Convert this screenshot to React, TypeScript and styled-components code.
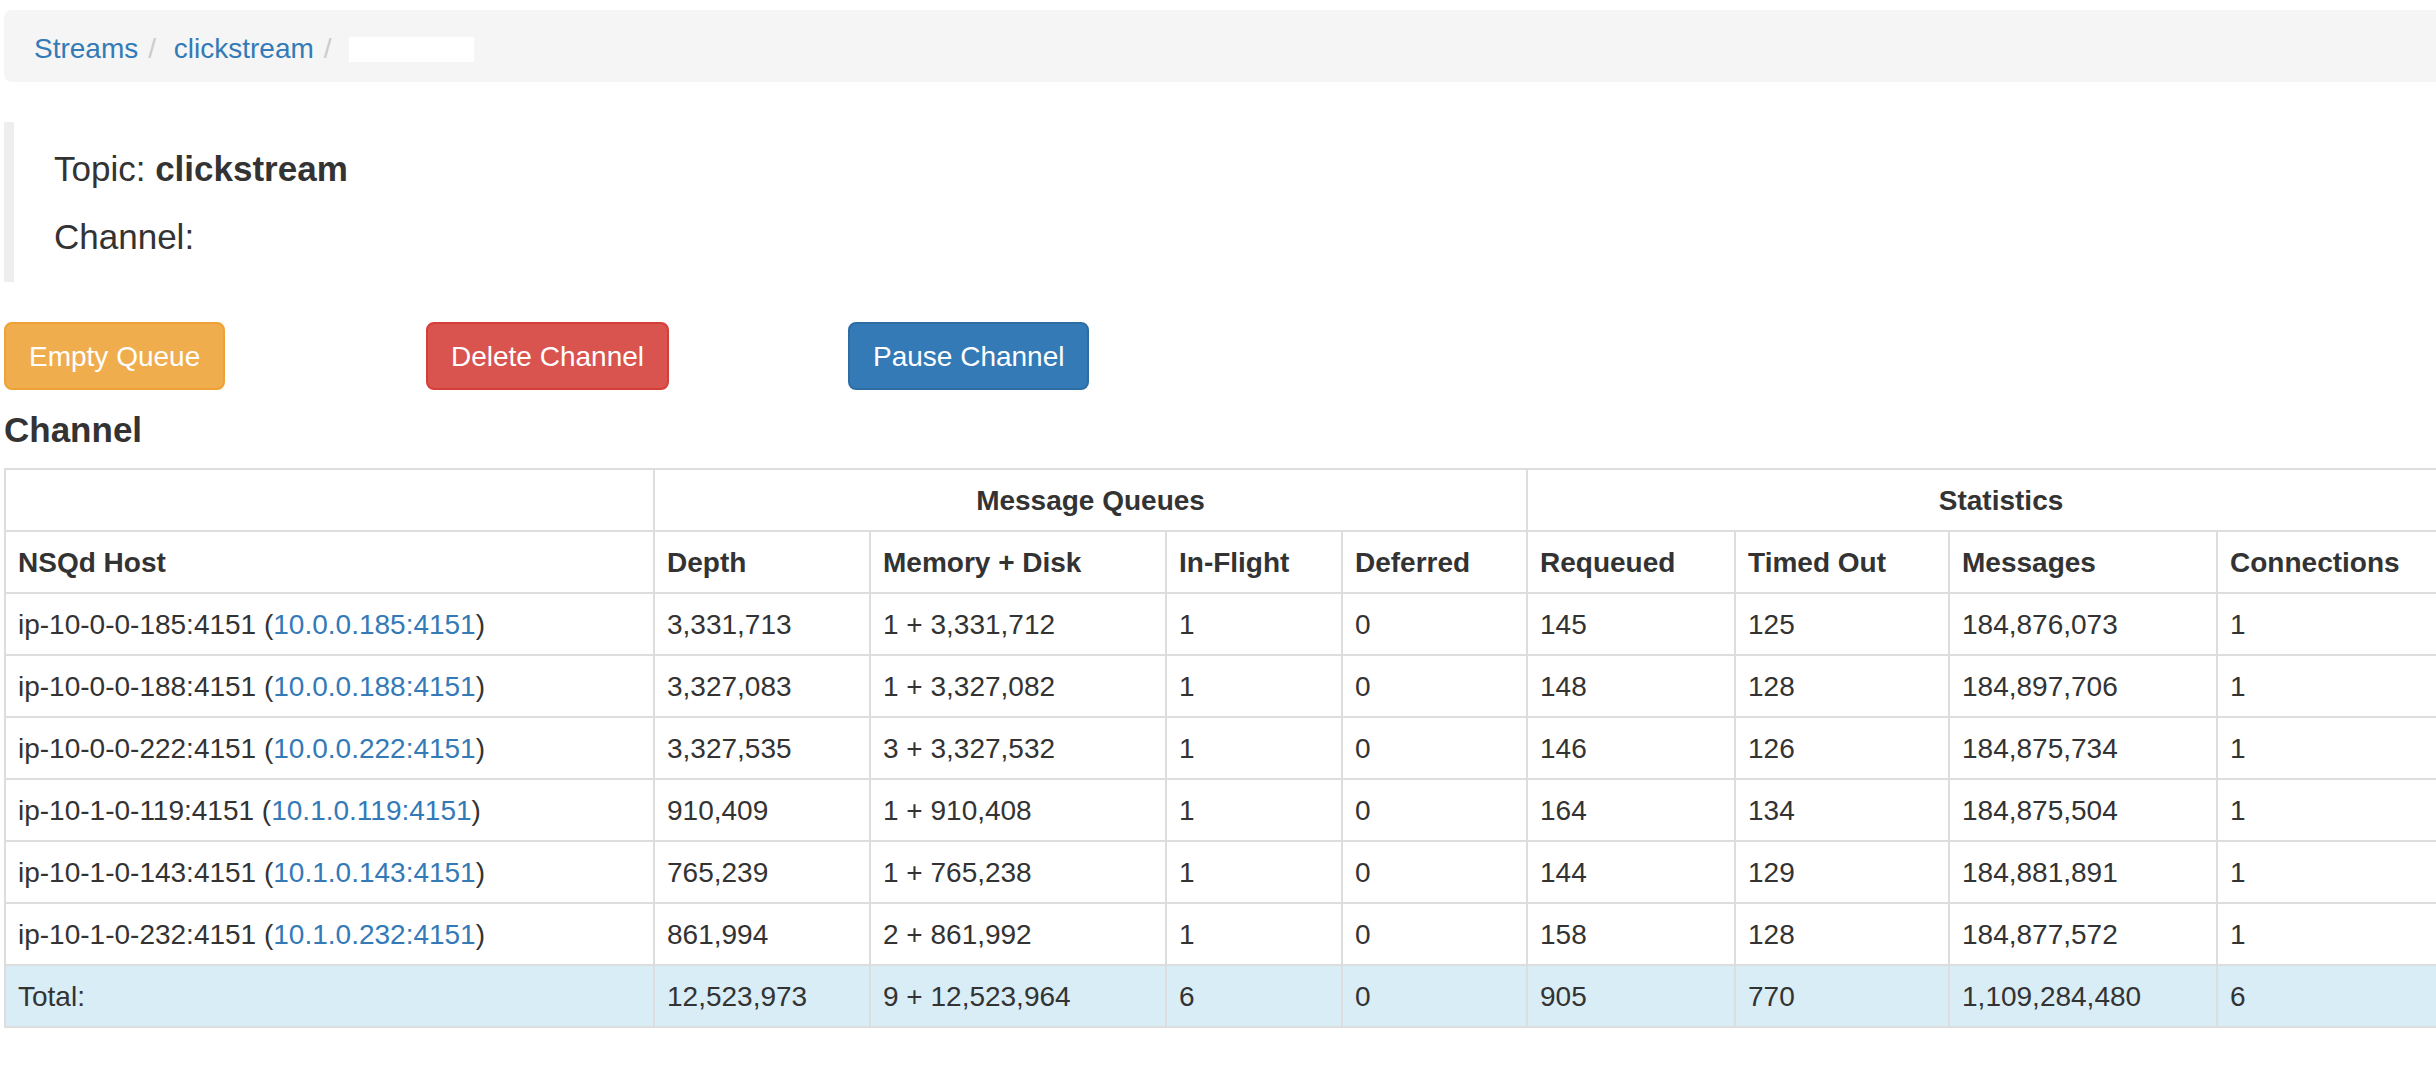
import React from 'react';
import styled, { createGlobalStyle } from 'styled-components';

const GlobalStyle = createGlobalStyle`
  html, body {
    margin: 0;
    padding: 0;
    overflow: hidden;
    background: #fff;
  }
  body {
    font-family: 'Liberation Sans', Arial, sans-serif;
    font-size: 28px;
    line-height: 40px;
    color: #333;
  }
`;

const Page = styled.div`
  width: 2470px;
  padding: 10px 0 0 4px;
`;

const Breadcrumb = styled.ol`
  display: flex;
  align-items: center;
  list-style: none;
  margin: 0 0 40px;
  padding: 19px 30px 13px;
  background: #f5f5f5;
  border-radius: 8px;
`;

const Crumb = styled.li`
  display: flex;
  align-items: center;
  & + &::before {
    content: '/\\00a0';
    padding: 0 10px;
    color: #ccc;
  }
`;

const Link = styled.a`
  color: #337ab7;
  text-decoration: none;
`;

const Redacted = styled.span`
  display: inline-block;
  width: 125px;
  height: 25px;
  background: #fff;
`;

const Quote = styled.blockquote`
  margin: 0 0 40px;
  padding: 20px 40px;
  border-left: 10px solid #eee;
  font-size: 35px;
  line-height: 50px;
`;

const QuoteLine = styled.p`
  margin: 0 0 20px;
  &:first-child {
    padding-top: 2px;
    margin-bottom: 18px;
  }
  &:last-child {
    margin-bottom: 0;
  }
`;

const ActionRow = styled.div`
  display: grid;
  grid-template-columns: repeat(3, 422px);
  align-items: start;
`;

const variants = {
  warning: { bg: '#f0ad4e', border: '#eea236' },
  danger: { bg: '#d9534f', border: '#d43f3a' },
  primary: { bg: '#337ab7', border: '#2e6da4' },
};

const Button = styled.button<{ $kind: keyof typeof variants }>`
  justify-self: start;
  font-family: inherit;
  font-size: 28px;
  line-height: 40px;
  padding: 13px 23px 11px;
  color: #fff;
  background: ${(p) => variants[p.$kind].bg};
  border: 2px solid ${(p) => variants[p.$kind].border};
  border-radius: 8px;
  cursor: pointer;
`;

const Heading = styled.h4`
  margin: 20px 0 18px;
  font-size: 35px;
  line-height: 39.6px;
  font-weight: 700;
`;

const Table = styled.table`
  width: 2470px;
  table-layout: fixed;
  border-collapse: collapse;
  border: 2px solid #ddd;
`;

const Th = styled.th<{ $center?: boolean }>`
  padding: 11px 12px 9px;
  border: 2px solid #ddd;
  text-align: ${(p) => (p.$center ? 'center' : 'left')};
  font-weight: 700;
  white-space: nowrap;
`;

const Td = styled.td`
  padding: 11px 12px 9px;
  border: 2px solid #ddd;
  white-space: nowrap;
`;

const Row = styled.tr<{ $total?: boolean }>`
  background: ${(p) => (p.$total ? '#d9edf7' : 'transparent')};
`;

const COLS = [649, 216, 296, 176, 185, 208, 214, 268, 258];

const HEADERS = [
  'NSQd Host',
  'Depth',
  'Memory + Disk',
  'In-Flight',
  'Deferred',
  'Requeued',
  'Timed Out',
  'Messages',
  'Connections',
];

const ROWS = [
  ['ip-10-0-0-185:4151', '10.0.0.185:4151', '3,331,713', '1 + 3,331,712', '1', '0', '145', '125', '184,876,073', '1'],
  ['ip-10-0-0-188:4151', '10.0.0.188:4151', '3,327,083', '1 + 3,327,082', '1', '0', '148', '128', '184,897,706', '1'],
  ['ip-10-0-0-222:4151', '10.0.0.222:4151', '3,327,535', '3 + 3,327,532', '1', '0', '146', '126', '184,875,734', '1'],
  ['ip-10-1-0-119:4151', '10.1.0.119:4151', '910,409', '1 + 910,408', '1', '0', '164', '134', '184,875,504', '1'],
  ['ip-10-1-0-143:4151', '10.1.0.143:4151', '765,239', '1 + 765,238', '1', '0', '144', '129', '184,881,891', '1'],
  ['ip-10-1-0-232:4151', '10.1.0.232:4151', '861,994', '2 + 861,992', '1', '0', '158', '128', '184,877,572', '1'],
];

const TOTAL = ['12,523,973', '9 + 12,523,964', '6', '0', '905', '770', '1,109,284,480', '6'];

const App = () => {
  return (
    <Page>
      <GlobalStyle />
      <Breadcrumb>
        <Crumb>
          <Link href="#">Streams</Link>
        </Crumb>
        <Crumb>
          <Link href="#">clickstream</Link>
        </Crumb>
        <Crumb>
          <Redacted />
        </Crumb>
      </Breadcrumb>

      <Quote>
        <QuoteLine>
          Topic: <strong>clickstream</strong>
        </QuoteLine>
        <QuoteLine>Channel: </QuoteLine>
      </Quote>

      <ActionRow>
        <Button $kind="warning">Empty Queue</Button>
        <Button $kind="danger">Delete Channel</Button>
        <Button $kind="primary">Pause Channel</Button>
      </ActionRow>

      <Heading>Channel</Heading>

      <Table>
        <colgroup>
          {COLS.map((w, i) => (
            <col key={i} style={{ width: w }} />
          ))}
        </colgroup>
        <tbody>
          <tr>
            <Th>&nbsp;</Th>
            <Th colSpan={4} $center>
              Message Queues
            </Th>
            <Th colSpan={4} $center>
              Statistics
            </Th>
          </tr>
          <tr>
            {HEADERS.map((h) => (
              <Th key={h}>{h}</Th>
            ))}
          </tr>
          {ROWS.map(([host, addr, ...cells]) => (
            <Row key={host}>
              <Td>
                {host} (<Link href="#">{addr}</Link>)
              </Td>
              {cells.map((c, i) => (
                <Td key={i}>{c}</Td>
              ))}
            </Row>
          ))}
          <Row $total>
            <Td>Total:</Td>
            {TOTAL.map((c, i) => (
              <Td key={i}>{c}</Td>
            ))}
          </Row>
        </tbody>
      </Table>
    </Page>
  );
};

export default App;
